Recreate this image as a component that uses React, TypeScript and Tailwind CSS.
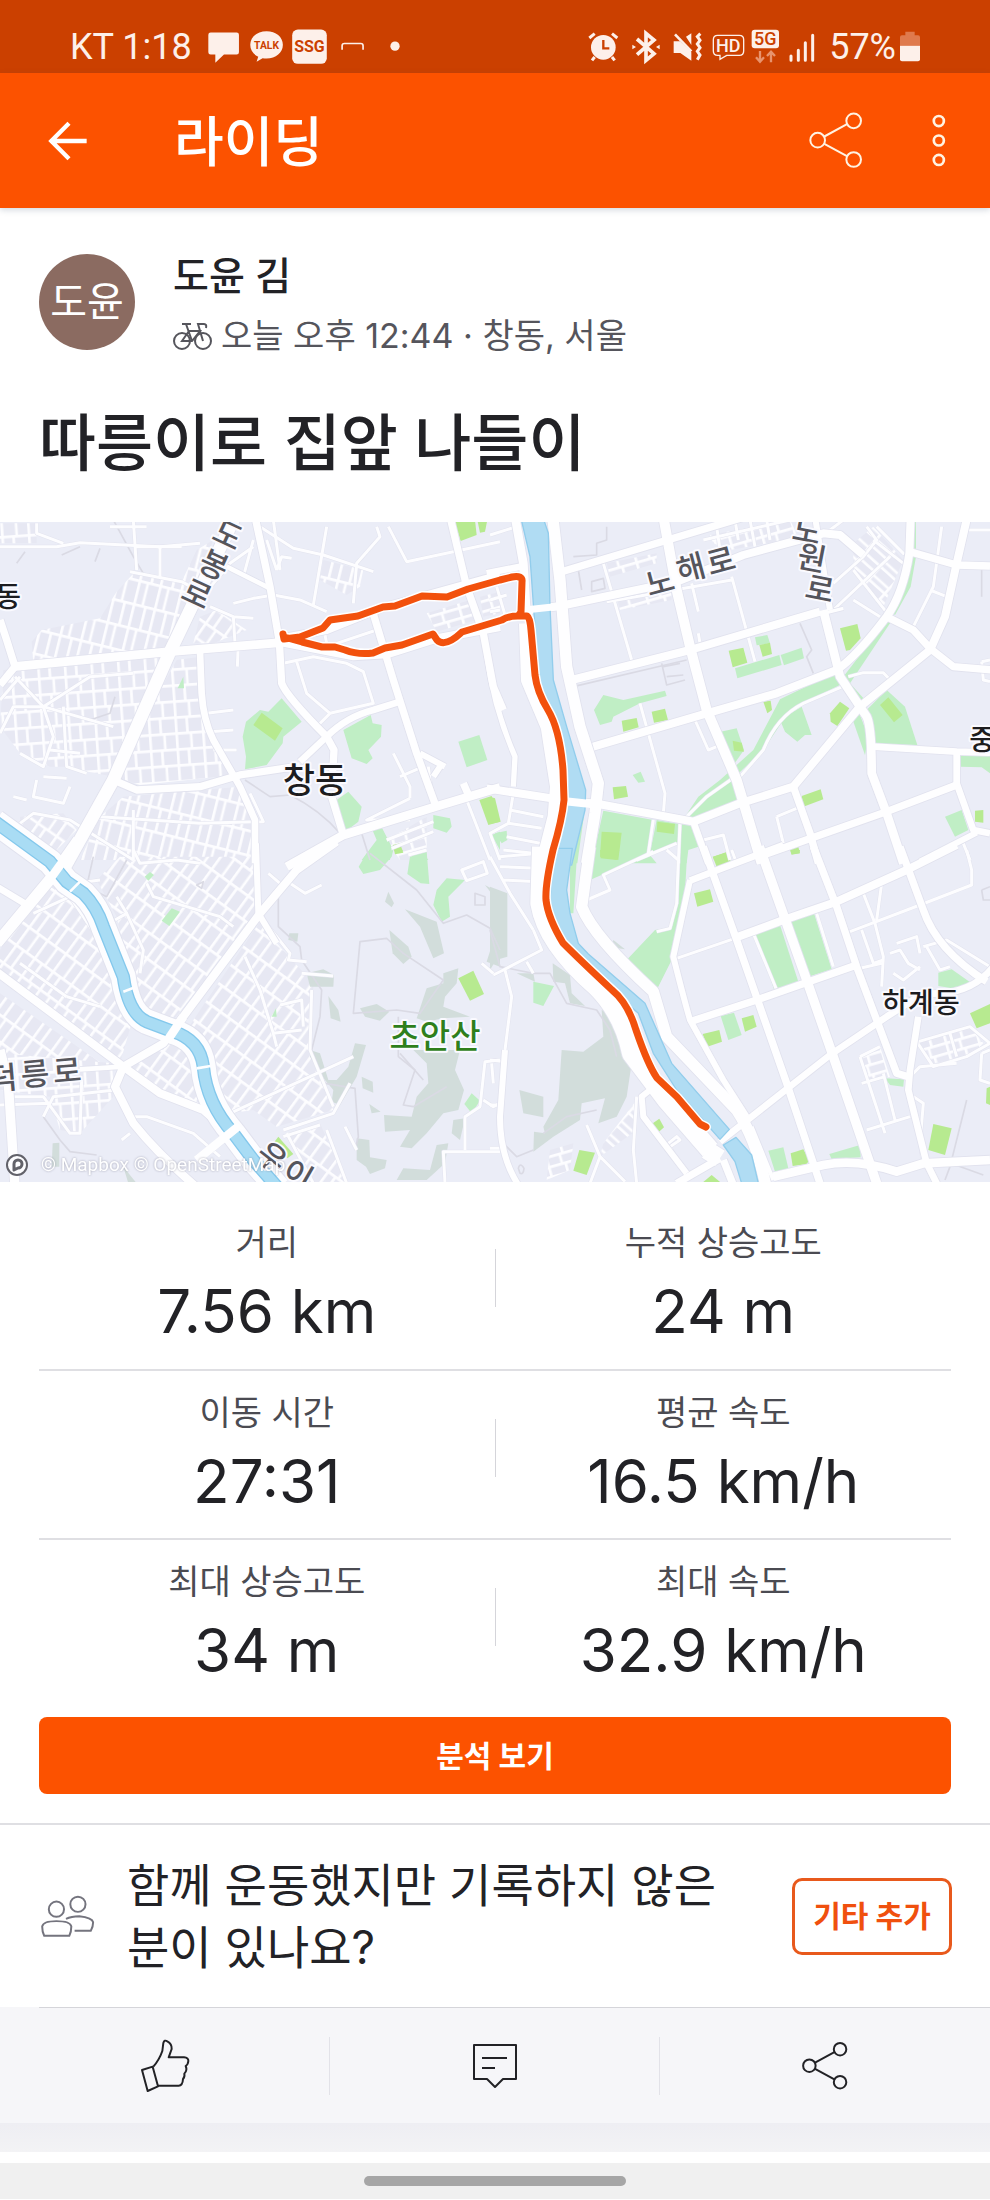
import type { ReactNode } from "react";

type Line = [number, string];

interface Tile {
  x: number;
  y: number;
  grids: [string, string][];
  park: string[];
  lime: string[];
  forest: string[];
  water: string[];
  trails: string[];
  minor: string[];
  roads: Line[];
}

// Each tile is drawn on a 1500-unit wide canvas at a third of its size.
const tiles: Tile[] = [
  {
    x: 0,
    y: 520,
    grids: [
      ["g-lean", "95,365 125,330 300,295 350,215 405,155 545,185 590,90 640,60 505,385 100,430"],
      ["g-flat", "10,450 490,410 340,770 190,740 150,740 60,700 0,620"],
      ["g-flat", "530,420 600,410 615,590 640,660 705,765 420,795 345,770 470,530"],
      ["g-lean", "370,830 720,800 770,900 765,1020 240,1020 300,890"],
      ["g-river", "60,890 190,880 230,930 150,1010 60,950"],
      ["g-lean", "970,120 1090,150 1080,200 1040,225 960,180"],
      ["g-slope", "1280,280 1410,240 1430,300 1310,335"],
      ["g-slope", "1440,230 1500,215 1500,280 1450,290"],
      ["g-slope", "1160,960 1280,890 1280,1020 1200,1020"],
      ["g-flat", "0,10 110,10 110,70 0,70"],
      ["g-river", "600,290 650,270 740,330 640,370 580,370"],
    ],
    park: [
      "845,535 905,605 850,650 848,670 800,735 735,748 738,710 728,650 738,605 780,570 805,575",
      "1030,630 1112,585 1118,610 1145,615 1143,650 1105,690 1118,715 1100,732 1055,715",
      "1010,840 1045,815 1085,860 1075,905 1035,935",
      "1375,665 1438,645 1462,720 1400,742",
      "1300,885 1350,895 1355,920 1340,938 1300,925",
      "1115,925 1145,922 1175,980 1170,1020 1085,1020 1130,960",
      "1235,1005 1270,1000 1285,1020 1235,1020",
      "550,470 552,505 533,505",
      "1475,945 1500,935 1500,990",
    ],
    lime: [
      "785,578 848,625 825,662 760,615",
      "1362,0 1425,0 1430,45 1382,63",
      "1432,0 1462,0 1455,35 1440,38",
      "1438,840 1475,828 1500,905 1465,915",
      "1178,975 1200,970 1210,998 1185,1003",
    ],
    forest: [],
    water: [],
    trails: [
      "M340,0 L400,110 L430,160",
      "M50,130 L75,95 M185,105 L240,80 M285,125 L300,85",
      "M735,780 L810,830 L870,825 Q960,870 1020,940",
      "M1085,940 L1110,1020",
      "M270,600 L330,580 L345,530",
    ],
    minor: [
      "M0,80 L170,80 L240,68 L480,80 L600,70",
      "M110,10 L110,40 L190,70 M330,20 L440,20",
      "M400,0 L410,150 M410,80 L545,80 M480,80 L480,170",
      "M390,155 L545,185 L600,215",
      "M630,260 L700,290 L760,295 M700,290 L705,370 M715,370 L712,440",
      "M700,250 L760,235 L820,225 L900,240 L980,275",
      "M780,20 L880,85 L970,105 L1120,155 M980,20 L940,255 M1130,20 L1140,50 L1070,130 L1060,250",
      "M1165,20 L1220,125 L1500,65 M830,150 L845,110 L875,115 M800,60 L830,150",
      "M850,430 L940,410 L1040,430 L1090,455 L1120,550 L990,580 L950,620",
      "M890,425 L920,520 L990,580",
      "M1010,370 L1130,330 M970,320 L980,370",
      "M620,580 L700,570 M630,635 L700,630 M640,690 L710,690",
      "M0,540 L60,470 M0,640 L40,560 L130,560 L160,650 L130,740 L60,700",
      "M45,470 L130,560 L340,620 M130,560 L270,470 L400,460",
      "M190,560 L200,740 L260,760 M150,690 L240,700",
      "M110,780 L100,830 L190,850 L210,800 M130,770 L200,775",
      "M60,910 L100,880 L210,900 L400,1020 M40,830 L80,840",
      "M1180,700 L1230,800 L1230,835 M1200,770 L1270,740 M1230,835 L1100,900 L1230,900",
      "M1400,840 L1470,1020 M1300,860 L1285,740",
      "M1160,960 L1300,905 M1175,985 L1300,935",
      "M620,215 L690,130 L760,80 M730,170 L760,60",
      "M820,0 L840,150",
      "M400,870 L400,1020 M300,890 L600,910 L790,905 L750,820",
    ],
    roads: [
      [38, "M705,-10 L510,395 L340,780 L195,1040"],
      [26, "M40,440 L510,395 L840,368"],
      [22, "M0,300 L20,360 L45,440 L0,495"],
      [22, "M765,-10 L810,200 L838,365 L845,490 Q860,530 980,650 L1002,690 L998,760 M995,830 L1030,945"],
      [26, "M840,365 L1060,408 L1160,402 L1300,358 L1500,320"],
      [24, "M860,352 L980,330 L1150,262 L1500,165"],
      [22, "M1350,-10 L1400,200 L1450,340 L1480,500 L1510,570"],
      [22, "M1115,265 L1180,480 L1250,700 L1310,865"],
      [20, "M900,725 L980,650 Q1040,590 1120,570 L1200,545"],
      [22, "M340,780 L410,810 L600,800 L720,765 L900,738"],
      [20, "M600,395 L605,520 Q610,600 640,660 L720,800 L765,900 L765,1030"],
      [26, "M860,1040 L1030,945 L1300,862 L1500,802"],
      [18, "M1260,700 L1335,740 M1300,770 L1320,740"],
      [22, "M1390,790 L1412,840"],
      [14, "M680,140 L810,205"],
    ],
  },
  {
    x: 490,
    y: 520,
    grids: [
      ["g-slope", "660,45 900,0 920,40 890,60 720,90 670,70"],
      ["g-diag", "1090,70 1150,20 1240,120 1180,260 1090,150"],
      ["g-slope", "350,130 500,100 500,130 360,170"],
      ["g-slope", "380,230 540,190 545,240 390,270"],
    ],
    park: [
      "1260,0 1278,0 1278,110 1262,200 1215,285 1198,270 1245,200 1258,110",
      "1195,295 1060,470 1080,490 1200,310",
      "1040,455 870,538 790,690 690,780 625,830 585,890 612,902 750,845 735,770 820,690 900,570 1060,490",
      "340,525 400,540 525,512 530,528 450,550 370,590 365,605 330,615 312,570",
      "735,445 868,405 875,435 742,475",
      "872,405 935,383 942,415 882,436",
      "795,352 832,345 840,370 800,376",
      "692,635 740,625 762,690 735,728 715,700",
      "870,600 935,560 965,645 945,645 922,665 885,635",
      "1120,580 1190,510 1245,560 1282,675 1150,672",
      "1085,590 1110,585 1135,650 1125,705",
      "1080,490 1125,540 1110,560 1070,510",
      "428,765 452,755 465,785 445,788",
      "340,872 490,900 475,1000 500,1030 305,1030",
      "500,900 570,912 565,965 480,1000",
      "575,912 605,915 625,980 595,990 590,1030 565,1030",
      "1365,890 1415,870 1435,930 1395,950",
      "1410,705 1500,705 1500,760 1475,742 1412,740",
      "15,940 50,932 52,960 35,970",
      "285,865 262,1030 240,1030 265,950",
    ],
    lime: [
      "1050,325 1102,312 1112,355 1080,390 1068,392",
      "716,392 760,383 772,428 728,442",
      "808,375 840,368 846,402 818,410",
      "395,602 440,594 446,622 400,635",
      "485,575 525,566 534,600 492,608",
      "820,545 842,542 846,570 832,580",
      "1020,580 1050,545 1078,565 1042,618 1022,605",
      "1170,555 1195,532 1238,585 1212,607",
      "728,662 755,668 762,695 732,692",
      "368,802 408,798 414,830 372,838",
      "935,828 992,808 1000,838 940,860",
      "335,935 395,938 385,1020 330,1010",
      "502,905 555,912 552,942 500,935",
      "900,985 925,980 930,1000 905,1003",
      "1455,872 1480,870 1480,908 1455,905",
      "0,830 15,835 32,905 0,912",
      "670,1010 712,995 720,1020 672,1020",
    ],
    forest: [],
    water: [
      "93,-5 160,-5 175,40 180,260 190,480 230,620 287,810 285,870 245,1035 190,1035 228,850 235,800 205,620 150,500 132,280 120,110",
    ],
    trails: [
      "M350,20 L350,60 L320,70 L320,105 L250,110 M265,150 L275,210",
      "M930,310 L965,390 L950,410 L970,460",
      "M515,430 L530,495 L585,480 M520,440 L570,430 M530,470 L580,465",
      "M305,185 L340,175 L345,205 L305,215 Z",
      "M250,500 L590,420 M1475,150 L1475,230",
    ],
    minor: [
      "M340,130 L425,420 M605,190 L625,275 M725,170 L795,425 M350,245 L725,180",
      "M625,340 L630,370 M680,20 L690,90 M735,0 L745,60 M780,0 L795,80 M830,0 L840,60 M640,60 L900,0",
      "M1090,150 L1200,290 M1030,190 L1120,110 L1160,60 L1130,20 M1150,60 L1240,130 M1020,30 L1060,0 M1030,270 L1200,110",
      "M1090,240 L1170,290 M1160,20 L1240,100 L1180,40",
      "M1355,20 L1330,200 L1270,320 M1320,210 L1370,230 M1410,30 L1500,30",
      "M1075,470 L1120,458 L1180,458 L1210,490 M1080,490 L940,550 Q860,590 820,690 L750,770",
      "M615,600 L655,690 L680,680 M450,550 L525,820 L520,880 M490,900 L475,1000 M570,910 L565,1030",
      "M735,770 L650,830 L590,890 M860,890 L920,865 M860,890 L880,970 M640,960 L700,945 L720,1020",
      "M20,200 L45,285 M0,240 L50,225 M0,275 L30,270",
      "M60,870 L160,890 M55,910 L155,925 M50,950 L150,970 M30,1010 L150,1000 M70,820 L55,910 L0,940 L30,1020",
      "M440,1020 L560,970 M1475,425 L1500,420 M1475,425 L1480,480 L1500,485",
      "M1420,970 L1440,1020 M0,45 L80,20",
    ],
    roads: [
      [26, "M75,-10 L100,130 L108,260"],
      [46, "M110,310 L116,480 L175,620 L203,800 L196,890 L160,1030"],
      [34, "M188,-10 L210,180 L230,440 L270,620 L325,790 L315,880 L290,1030"],
      [30, "M520,-10 L560,210 L600,380 L650,570 L740,780 L815,1030"],
      [22, "M215,155 L500,70 L800,-20"],
      [24, "M120,270 L210,258 L560,185 L760,105 L1000,40 L1050,45 L1120,105"],
      [20, "M-10,160 L90,140"],
      [24, "M245,480 L600,390 L990,275"],
      [10, "M1000,280 L1060,265"],
      [24, "M310,680 L650,580 L860,520 L1040,450 Q1100,410 1190,290 Q1240,220 1258,100 L1262,-10"],
      [26, "M1000,270 L1050,470 L1130,590 Q1145,620 1145,760 L1190,880 L1240,1030"],
      [18, "M975,-10 L1020,270"],
      [22, "M1260,95 L1400,135 L1500,138"],
      [24, "M1432,-10 L1400,130 L1365,290 L1320,390 L1110,560 L910,800 L750,850 L610,905 L325,852 L230,842 L-10,805"],
      [22, "M1190,290 L1270,330 L1320,385 L1390,440 L1510,450"],
      [20, "M1150,680 L1400,695 L1500,698"],
      [20, "M1400,695 L1400,790 L1450,930 L1500,940"],
      [22, "M820,1005 L1190,875 L1400,795"],
      [22, "M910,800 L960,940 L985,1030"],
      [20, "M610,905 L655,1030"],
      [18, "M1290,1025 L1460,938"],
      [16, "M-10,400 Q10,560 75,710 L70,800"],
    ],
  },
  {
    x: 0,
    y: 850,
    grids: [
      ["g-sw", "0,300 150,90 240,120 300,240 370,420 400,500 360,640 0,380"],
      ["g-sw", "0,430 320,650 0,640"],
      ["g-sw", "360,20 760,20 770,190 520,510 440,480 380,330 350,200 290,90"],
      ["g-sw", "790,200 830,280 940,400 935,600 1000,780 830,830 760,780 690,790 640,640 560,540"],
      ["g-sw", "390,650 520,560 590,640 620,770 480,720"],
      ["g-flat", "120,620 340,640 340,740 240,850 180,840 150,740 0,720 0,610"],
      ["g-sw", "860,850 960,820 1040,1000 930,1000"],
    ],
    park: [
      "1100,10 1180,0 1175,20 1140,60 1090,72 1076,50",
      "1230,20 1280,5 1288,102 1262,100 1222,72",
      "1340,85 1395,90 1345,140 1350,200 1325,215 1300,165 1310,120",
      "515,175 540,185 508,228 485,212",
      "450,66 462,75 445,92 434,80",
      "1415,730 1440,752 1415,790 1393,762",
      "828,475 830,500 815,500",
    ],
    lime: [
      "1375,385 1420,362 1452,432 1410,452",
      "835,860 880,912 862,925 820,880",
      "1182,0 1210,0 1195,10",
    ],
    forest: [
      "1215,178 1310,215 1332,310 1300,325 1260,230",
      "1168,240 1225,290 1235,320 1210,342 1178,310",
      "1165,125 1182,160 1175,172 1155,155",
      "868,250 895,250 892,275 865,270",
      "920,370 970,358 1002,375 1000,410 930,410",
      "985,438 1015,480 1022,515 992,505",
      "1080,475 1130,462 1168,485 1140,512 1095,500",
      "1330,370 1375,355 1370,400 1335,440 1330,470 1410,500 1330,505 1280,515 1250,505 1280,415 1330,400",
      "1240,600 1380,600 1365,660 1392,720 1375,780 1330,790 1280,850 1235,895 1200,890 1230,840 1155,845 1152,795 1235,800 1250,740 1285,700 1280,640",
      "1065,580 1098,585 1070,680 1020,765 995,755 1000,720 975,690 930,620 930,600 960,610 985,690 1010,690 1045,650",
      "1085,680 1118,695 1120,728 1088,715",
      "1108,762 1142,785 1115,790",
      "1070,865 1108,870 1110,922 1160,930 1155,955 1110,972 1098,950 1070,930",
      "1360,810 1395,805 1380,870 1355,850",
      "1310,885 1345,880 1335,940 1280,990 1190,990 1210,955 1290,960",
      "1455,105 1500,130 1500,350 1460,335 1490,240 1490,150",
      "158,880 178,878 178,950 155,950",
      "370,950 410,1000 385,1000",
    ],
    water: [],
    trails: [
      "M835,120 L835,230 L900,290 L905,330 L965,420 L960,500 L935,600 L975,700 L1065,715 L1075,860 L1065,900",
      "M1080,275 L1160,265 L1210,310 L1330,390 L1260,490 L1190,480 L1060,490 Z",
      "M1110,10 L1250,120 L1330,220 L1400,195 L1470,235 L1500,300",
      "M1195,500 L1195,620 L1245,660 L1210,765 L1240,770 L1340,710",
      "M1425,130 L1455,140 L1455,165 L1425,165 Z",
      "M130,800 L180,870 L210,905 L290,915 M280,20 L260,110 L320,140 L380,30",
      "M1200,610 L1270,690 M590,105 L610,95 L605,115 Z",
    ],
    minor: [
      "M60,340 L200,440 M40,740 L130,740 L210,850 L240,850 L245,690",
      "M400,0 L420,40 L530,30 L600,40 M440,100 L460,140 L660,200 L700,230",
      "M350,140 L380,190 L345,210 M380,190 L430,300 L420,370",
      "M870,100 L915,130 L965,105 M840,100 L805,70 M1225,15 L1280,0",
      "M735,320 L780,420 L820,550 L830,590 M790,210 L870,310 L865,330 L920,335 M820,550 L905,540",
      "M905,370 L1000,378 M935,420 L930,600 L1000,770 M840,465 L905,450 L910,530",
      "M690,790 L1060,620 M1050,700 L1000,790 L850,840 M850,860 L960,825",
      "M400,800 L440,800 L580,850 L660,920 M365,870 L390,850",
      "M345,720 L160,740 L130,800 M0,765 L150,760",
      "M1385,60 L1450,35 L1462,70 L1400,92 Z M1445,340 L1480,370",
      "M1450,750 L1480,770 L1500,760 M1335,1000 L1330,905 L1500,905 M1395,900 L1395,800 L1440,770 L1455,635 L1500,630",
      "M230,100 L300,90 M100,190 L210,140 L290,260 M200,440 L300,470",
      "M860,850 L940,1000 M1070,900 L1035,830 M980,840 L1040,1000",
    ],
    roads: [
      [34, "M235,-30 L165,70 L-10,280"],
      [24, "M1010,-25 L890,60 L780,190 L520,540 L490,580 L370,650 L345,710 L400,820 Q480,920 600,1020"],
      [18, "M768,-20 L775,190 L830,280"],
      [24, "M-10,365 L370,650 L480,730 L610,780 L680,840"],
      [20, "M-10,110 L90,170"],
      [28, "M0,600 L25,700 L45,1010"],
      [14, "M240,658 L370,650"],
      [20, "M590,930 L710,835"],
    ],
  },
  {
    x: 490,
    y: 850,
    grids: [
      ["g-slope", "1285,580 1440,530 1480,580 1440,620 1330,640"],
      ["g-slope", "1110,620 1170,590 1200,680 1130,700"],
      ["g-diag", "440,750 440,840 330,920 340,880"],
      ["g-slope", "180,900 250,880 240,960 170,990"],
    ],
    park: [
      "300,0 490,0 350,68 300,90",
      "570,0 592,0 582,180 545,330 495,430 475,420 410,330 495,240 545,232 565,160",
      "240,50 262,0 250,190 240,190",
      "795,248 870,225 925,395 852,418",
      "900,212 972,190 1025,358 955,380",
      "692,498 732,488 755,555 715,570",
      "130,395 192,408 160,468 130,458",
      "1345,368 1385,358 1448,402 1420,420 1345,408",
      "1185,685 1242,688 1240,710 1200,705",
      "835,902 880,892 895,955 855,965",
      "1018,912 1110,885 1112,922 1025,928",
    ],
    lime: [
      "330,0 388,0 380,30 332,25",
      "668,20 715,6 722,35 680,50",
      "612,130 660,118 670,155 622,170",
      "638,552 688,540 696,575 652,590",
      "755,505 790,495 800,530 765,545",
      "900,0 930,0 928,10 905,14",
      "485,822 508,806 522,832 502,850",
      "268,900 315,908 290,975 250,962",
      "902,910 940,898 958,930 950,942 908,948",
      "1330,822 1385,835 1365,915 1315,900",
      "1440,490 1500,462 1500,520 1460,535",
      "1490,715 1500,710 1500,765 1488,760",
      "635,1000 665,975 695,1000",
    ],
    forest: [
      "0,110 52,130 52,320 18,330 0,360",
      "188,340 240,375 245,430 285,468 240,460 225,400 190,395",
      "335,480 380,500 400,560 425,640 410,740 380,800 325,820 345,745 275,760 270,810 190,860 130,905 132,845 165,850 160,830 205,750 215,600 280,605 340,560",
      "88,720 160,740 160,802 100,790",
      "190,50 215,30 210,70 195,80",
      "80,370 130,370 135,395",
      "370,270 405,298 365,292",
    ],
    water: [
      "192,-5 247,-5 230,120 240,190 265,280 295,312 465,460 545,640 718,838 690,868 560,720 490,610 445,490 300,365 205,250 180,150",
      "700,885 738,862 785,915 805,1000 755,1000 735,935",
    ],
    trails: [
      "M0,240 L30,350 L130,370 L180,370 L230,460 L320,480 L360,540 L380,620",
      "M130,900 L80,920 L40,880 M320,780 L230,800 L160,850",
      "M1430,750 L1380,950 L1365,990 M1370,935 L1480,975",
      "M85,955 Q90,935 102,955 Q100,975 90,970 Z",
      "M1475,120 L1500,110 M1475,120 L1480,150 L1500,150",
    ],
    minor: [
      "M0,20 L60,130 L130,240 M40,90 L145,95 M30,50 L140,55 M40,0 L150,12",
      "M130,240 L155,300 L40,360 L10,375 M45,360 L65,440 L45,600 M110,335 L130,370",
      "M290,150 L360,120 L340,75 L490,5 M530,0 L565,30 L560,160 L540,235 L500,245",
      "M560,325 L735,265 M1080,245 L1290,165 L1445,105 L1445,60 L1430,0",
      "M1120,130 L1155,220 L1180,320 L1175,410 M1175,100 L1160,210 M1115,240 L1150,340 L1180,330 M1110,355 L1175,340",
      "M1200,310 L1230,300 L1255,340 L1290,360 M1220,280 L1280,260 L1290,310 M1210,370 L1240,390 L1290,350 M1300,290 L1370,270 L1500,350 M1310,290 L1350,360 L1380,350",
      "M980,190 L1030,350 M725,0 L740,40 M790,250 L860,420",
      "M1280,575 L1330,650 L1430,620 L1500,580 M1260,680 L1290,650 L1400,640 M1285,575 L1440,530 L1500,580 M1380,550 L1400,620",
      "M1110,620 L1185,850 M1180,670 L1215,810 M1115,700 L1185,680 M1130,840 L1260,800 M1110,620 L1170,590 M1255,730 L1300,760 L1290,880 L1300,940",
      "M535,880 L560,860 L570,870 L540,890 L555,920 M290,825 L330,920 L405,995 M440,740 L430,900 L440,1000 M330,920 L300,1000",
      "M0,630 L45,635 M0,765 L30,765 M0,895 L35,895 M5,640 L10,700 M1475,610 L1500,600 M1475,610 L1470,690 L1500,700",
    ],
    roads: [
      [58, "M155,-10 L150,160 Q170,280 320,410 Q400,490 425,610 L530,750 L660,900"],
      [34, "M300,-10 L275,170 Q310,260 490,425 L530,560 L740,780 Q800,870 828,1010"],
      [22, "M640,-10 L740,270 L890,700 L990,1000"],
      [28, "M808,-10 L950,390 L1030,620 L1160,1000"],
      [22, "M970,-10 L1040,170 L1100,350 L1220,670 L1255,680"],
      [22, "M1230,-10 L1300,180 Q1340,300 1490,395"],
      [20, "M600,92 L670,65 L880,-15"],
      [18, "M600,90 L550,320 Q580,440 600,510 L700,690 L770,800"],
      [12, "M785,830 L850,990"],
      [24, "M740,262 L880,210 L1040,155 L1250,60 L1400,-15"],
      [22, "M600,515 L800,450 L1100,345"],
      [20, "M690,875 L1020,615 L1190,500 L1300,430 Q1440,440 1510,350"],
      [20, "M1285,500 L1260,660 L1255,720 L1310,940 L1345,1010"],
      [26, "M850,980 L1000,945 Q1100,925 1220,965 L1300,940 L1500,930"],
      [18, "M45,600 L30,800 Q30,920 85,1005"],
      [18, "M480,720 L455,740 L460,800 L590,970"],
      [54, "M650,900 L690,925"],
      [22, "M690,925 L560,1000 M700,930 L730,1005"],
    ],
  },
];

const canal = "M-15,-85 L150,35 L200,95 L250,130 Q290,170 310,230 L370,380 Q385,490 440,515 L520,545 Q600,570 610,650 Q620,760 700,850 L760,930 L835,1015";

const route =
  "M283,634 L284,639 L300,637 L323,628 L330,620 L358,616 L383,607 L395,606 L422,596 L447,597 L468,589 L500,580 L512,577 Q523,575 522,582 L521,612 L518,616 Q508,616 502,620 L482,626 L462,632 Q445,648 437,640 L433,634 L402,645 L385,648 L373,653 Q358,655 345,650 L335,647 L322,647 L302,642 L284,637 M518,616 L527,616 Q530,618 531,630 L535,675 Q537,692 548,710 Q560,730 563,770 L564,800 Q562,820 553,850 Q545,885 546,900 Q548,918 563,943 Q580,960 612,990 Q628,1003 636,1030 Q648,1065 657,1078 L677,1097 L700,1124 L706,1127";

const grids = [
  { id: "g-lean", w: 32, h: 72, r: 14 },
  { id: "g-flat", w: 40, h: 48, r: -4 },
  { id: "g-river", w: 34, h: 52, r: 35 },
  { id: "g-slope", w: 48, h: 30, r: -16 },
  { id: "g-diag", w: 26, h: 64, r: -48 },
  { id: "g-sw", w: 34, h: 66, r: 36 },
];

const labels = [
  { t: "도", x: 228, y: 535, r: 25, c: "fill-[#55555c] font-medium text-[31px]" },
  { t: "봉", x: 214, y: 565, r: 25, c: "fill-[#55555c] font-medium text-[31px]" },
  { t: "로", x: 197, y: 594, r: 25, c: "fill-[#55555c] font-medium text-[31px]" },
  { t: "노", x: 660, y: 582, r: -15, c: "fill-[#55555c] font-medium text-[31px]" },
  { t: "해", x: 691, y: 568, r: -15, c: "fill-[#55555c] font-medium text-[31px]" },
  { t: "로", x: 721, y: 561, r: -15, c: "fill-[#55555c] font-medium text-[31px]" },
  { t: "노", x: 807, y: 531, r: 11, c: "fill-[#55555c] font-medium text-[31px]" },
  { t: "원", x: 812, y: 558, r: 11, c: "fill-[#55555c] font-medium text-[31px]" },
  { t: "로", x: 820, y: 589, r: 11, c: "fill-[#55555c] font-medium text-[31px]" },
  { t: "덕", x: 3, y: 1078, r: -5, c: "fill-[#55555c] font-medium text-[31px]" },
  { t: "릉", x: 35, y: 1074, r: -5, c: "fill-[#55555c] font-medium text-[31px]" },
  { t: "로", x: 67, y: 1071, r: -5, c: "fill-[#55555c] font-medium text-[31px]" },
  { t: "우", x: 272, y: 1157, r: 38, c: "fill-[#55555c] font-medium text-[31px]" },
  { t: "이", x: 298, y: 1175, r: 30, c: "fill-[#55555c] font-medium text-[31px]" },
  { t: "동", x: 8, y: 597, r: 0, c: "fill-[#1d1d20] font-medium text-[28px]" },
  { t: "중", x: 982, y: 740, r: 0, c: "fill-[#1d1d20] font-medium text-[28px]" },
  { t: "창동", x: 315, y: 780, r: 0, c: "fill-[#1d1d20] font-medium text-[35px]" },
  { t: "하계동", x: 921, y: 1003, r: 0, c: "fill-[#1d1d20] font-medium text-[28px]" },
  { t: "초안산", x: 435, y: 1036, r: 0, c: "fill-[#2f7f1c] font-medium text-[33px]" },
];

function Layer({ draw }: { draw: (t: Tile) => ReactNode }) {
  return (
    <>
      {tiles.map((t) => (
        <g key={`${t.x}-${t.y}`} transform={`translate(${t.x} ${t.y}) scale(0.33333)`}>
          {draw(t)}
        </g>
      ))}
    </>
  );
}

function RouteMap() {
  const poly = (list: string[], fill: string) => list.map((p) => <polygon key={p} points={p} fill={fill} />);
  const lines = (list: string[], stroke: string, w: number) =>
    list.map((d) => <path key={d} d={d} stroke={stroke} strokeWidth={w} />);
  return (
    <svg
      viewBox="0 522 990 660"
      className="block h-auto w-full bg-[#ebedf7] font-['Noto_Sans_CJK_KR',sans-serif]"
      fill="none"
      strokeLinejoin="round"
      role="img"
      aria-label="라이딩 경로 지도"
    >
      <defs>
        {grids.map((g) => (
          <pattern key={g.id} id={g.id} width={g.w * 2} height={g.h * 2} patternUnits="userSpaceOnUse" patternTransform={`rotate(${g.r})`}>
            <rect width={g.w * 2} height={g.h * 2} fill="#e7e8f3" />
            <path
              d={`M0,4 H${g.w * 2} M0,${g.h + 4} H${g.w * 2} M4,0 V${g.h * 2} M${g.w + 7},0 V${g.h} M${g.w - 3},${g.h} V${g.h * 2}`}
              stroke="#fdfdff"
              strokeWidth="8"
            />
          </pattern>
        ))}
      </defs>
      <Layer draw={(t) => t.grids.map(([id, p]) => <polygon key={p} points={p} fill={`url(#${id})`} />)} />
      <Layer draw={(t) => poly(t.forest, "#d2dddb")} />
      <Layer draw={(t) => poly(t.park, "#c0eec5")} />
      <Layer draw={(t) => poly(t.lime, "#b7ea90")} />
      <Layer draw={(t) => lines(t.trails, "#dadae4", 5)} />
      <Layer draw={(t) => lines(t.minor, "#e3e4ef", 12)} />
      <Layer draw={(t) => lines(t.minor, "#fdfdff", 9)} />
      <Layer draw={(t) => t.roads.map(([w, d]) => <path key={d} d={d} stroke="#e1e2ee" strokeWidth={w + 5} />)} />
      <g transform="translate(0 850) scale(0.33333)">
        <path d={canal} stroke="#e1e2ee" strokeWidth="80" />
        <path d={canal} stroke="#fdfdff" strokeWidth="74" />
      </g>
      <Layer draw={(t) => t.roads.map(([w, d]) => <path key={d} d={d} stroke="#fefeff" strokeWidth={w} />)} />
      <Layer draw={(t) => t.water.map((p) => <polygon key={p} points={p} fill="#b0dcf3" stroke="#92cdec" strokeWidth="4" />)} />
      <g transform="translate(0 850) scale(0.33333)">
        <path d={canal} stroke="#84c8ec" strokeWidth="40" />
        <path d={canal} stroke="#a9dcf4" strokeWidth="32" />
        <path d="M235,-30 L130,115 M550,500 L500,575 M590,930 L720,825" stroke="#fefeff" strokeWidth="26" />
        <path d="M210,125 L240,95 M370,425 L405,412 M590,655 L632,648" stroke="#fefeff" strokeWidth="8" />
      </g>
      <path d="M525,610 L562,606" stroke="#fefeff" strokeWidth="7" />
      <path d="M563,801 L600,805" stroke="#fefeff" strokeWidth="8" />
      <path d={route} stroke="#ffffff" strokeWidth="10" strokeLinecap="round" />
      <path d={route} stroke="#f2510d" strokeWidth="7" strokeLinecap="round" />
      {labels.map((l) => (
        <text
          key={`${l.x}-${l.y}`}
          transform={`translate(${l.x} ${l.y}) rotate(${l.r})`}
          textAnchor="middle"
          dy="0.36em"
          stroke="#fafaff"
          strokeWidth="4"
          paintOrder="stroke"
          className={l.c}
        >
          {l.t}
        </text>
      ))}
      <circle cx="17" cy="1165" r="10" fill="#fdfdff" stroke="#62626a" strokeWidth="2" />
      <path d="M14,1170 V1164 A4 4 0 1 1 18,1168 Z" stroke="#62626a" strokeWidth="3" />
      <text x="41" y="1171" className="fill-white font-['Roboto',sans-serif] text-[19px] drop-shadow-[0_0_1px_rgba(120,120,140,0.6)]">
        © Mapbox © OpenStreetMap
      </text>
    </svg>
  );
}

function ShareIcon({ className, width }: { className: string; width: number }) {
  return (
    <svg viewBox="955 332 168 176" className={className} fill="none" stroke="currentColor" strokeWidth={width}>
      <circle cx="984" cy="419" r="22" />
      <circle cx="1092" cy="361" r="22" />
      <circle cx="1092" cy="477" r="22" />
      <path d="M1004,408 L1072,371 M1004,430 L1072,467" />
    </svg>
  );
}

function StatusBar() {
  return (
    <div className="flex h-[73px] items-center justify-between bg-[#cb4000] pt-5 pr-[70px] pl-[70px] text-[#fdf0ea]">
      <div className="flex items-center">
        <span className="font-['Roboto',sans-serif] text-[36px] leading-none">KT 1:18</span>
        <svg viewBox="620 84 580 104" className="ml-4 h-[35px] w-[193px]" fill="currentColor">
          <path d="M628,94 H706 Q713,94 713,101 V153 Q713,160 706,160 H668 L642,185 V160 H628 Q621,160 621,153 V101 Q621,94 628,94 Z" />
          <path d="M796,90 C824,90 845,107 845,131 C845,155 824,172 796,172 Q790,172 784,171 L766,182 L771,167 C756,160 747,147 747,131 C747,107 768,90 796,90 Z" />
          <rect x="873" y="85" width="104" height="103" rx="17" />
          <path d="M1023,146 V134 Q1023,127 1030,127 H1079 Q1086,127 1086,134 V146" fill="none" stroke="currentColor" strokeWidth="5" />
          <circle cx="1182" cy="135" r="14" />
          <text x="796" y="143" textAnchor="middle" className="fill-[#cb4000] font-['Roboto',sans-serif] text-[31px] font-bold">TALK</text>
          <text x="925" y="152" textAnchor="middle" className="fill-[#cb4000] font-['Roboto',sans-serif] text-[48px] font-bold">SSG</text>
        </svg>
      </div>
      <div className="flex items-center">
        <svg viewBox="296 80 684 108" className="mr-[13px] h-9 w-[228px]" fill="currentColor">
          <circle cx="342" cy="135" r="37" />
          <path d="M316,164 L308,174 M368,164 L376,174 M300,107 L316,94 M384,107 L368,94" stroke="currentColor" strokeWidth="9" />
          <path d="M342,113 V138 H360" fill="none" stroke="#cb4000" strokeWidth="7" />
          <path d="M443,110 L494,154 L470,174 V93 L494,113 L443,157" fill="none" stroke="currentColor" strokeWidth="11" />
          <path d="M429,127 L440,134 L429,141 Z M511,127 L500,134 L511,141 Z" />
          <path d="M553,117 H572 L606,150 V175 L573,152 H553 Z M590,103 L606,93 V128 Z" />
          <path d="M557,96 L606,147" stroke="currentColor" strokeWidth="8" />
          <path d="M633,94 L624,103 L632,114 L624,125 L632,136 L624,147 L632,158 L624,172" fill="none" stroke="currentColor" strokeWidth="9" />
          <path d="M685,99 H750 Q763,99 763,112 V146 Q763,159 750,159 H712 L692,171 V159 H685 Q672,159 672,146 V112 Q672,99 685,99 Z" fill="none" stroke="currentColor" strokeWidth="4" />
          <text x="717" y="149" textAnchor="middle" className="font-['Roboto',sans-serif] text-[54px] font-medium">HD</text>
          <rect x="787" y="82" width="82" height="56" rx="9" />
          <text x="828" y="129" textAnchor="middle" className="fill-[#cb4000] font-['Roboto',sans-serif] text-[54px] font-medium">5G</text>
          <path d="M812,146 V176 M800,165 L812,178 L824,165 M845,180 V150 M833,161 L845,148 L857,161" fill="none" stroke="#e8936d" strokeWidth="7" />
          <path d="M905,161 V174 M927,144 V174 M948,121 V174 M970,99 V174" stroke="currentColor" strokeWidth="9" strokeLinecap="round" />
        </svg>
        <span className="font-['Roboto',sans-serif] text-[36px] leading-none">57%</span>
        <svg viewBox="1227 88 60 92" className="ml-1 h-[31px] w-5" fill="currentColor">
          <path d="M1243,90 H1271 V100 H1281 Q1287,100 1287,106 V132 H1227 V106 Q1227,100 1233,100 H1243 Z" fill="#df7a4d" />
          <path d="M1227,132 H1287 V172 Q1287,178 1281,178 H1233 Q1227,178 1227,172 Z" />
        </svg>
      </div>
    </div>
  );
}

function Stat({ label, value }: { label: string; value: string }) {
  return (
    <div className="flex flex-1 flex-col items-center">
      <dt className="text-[34px] leading-[48px] text-[#4b4b52]">{label}</dt>
      <dd className="mt-2 text-[60px] leading-[72px] text-[#222226]">{value}</dd>
    </div>
  );
}

const stats = [
  [["거리", "7.56 km"], ["누적 상승고도", "24 m"]],
  [["이동 시간", "27:31"], ["평균 속도", "16.5 km/h"]],
  [["최대 상승고도", "34 m"], ["최대 속도", "32.9 km/h"]],
];

export default function App() {
  return (
    <div className="flex min-h-screen flex-col bg-white font-['Inter','Noto_Sans_CJK_KR',sans-serif] text-[#222226]" lang="ko">
      <StatusBar />
      <header className="relative flex h-[135px] items-center bg-[#fc5200] pr-11 pl-12 text-white shadow-[0_2px_6px_rgba(60,80,110,0.22)]">
        <button type="button" aria-label="뒤로" className="mr-[87px]">
          <svg viewBox="145 362 117 120" className="h-10 w-[39px]" fill="none" stroke="currentColor" strokeWidth="13">
            <path d="M261,422 H156 M208,369 L155,422 L208,475" />
          </svg>
        </button>
        <h1 className="flex-1 pt-1 text-[54px] leading-none font-medium">라이딩</h1>
        <button type="button" aria-label="공유" className="mr-[68px] text-[#fff3e2]">
          <ShareIcon className="h-[59px] w-14" width={6} />
        </button>
        <button type="button" aria-label="더보기" className="text-[#fff3e2]">
          <svg viewBox="1325 340 41 158" className="h-[53px] w-[14px]" fill="none" stroke="currentColor" strokeWidth="8">
            <circle cx="1345" cy="361" r="15" />
            <circle cx="1345" cy="419" r="15" />
            <circle cx="1345" cy="477" r="15" />
          </svg>
        </button>
      </header>

      <main>
        <section className="px-[39px] pt-11">
          <div className="flex items-start">
            <div className="mt-0.5 flex size-24 items-center justify-center rounded-full bg-[#8b6b61] text-[40px] leading-none text-white">도윤</div>
            <div className="ml-[38px]">
              <p className="text-[39px] leading-[48px] font-medium">도윤 김</p>
              <p className="mt-3 flex items-center text-[34px] leading-[48px] text-[#55555c]">
                <svg viewBox="173 318 40 30" className="mr-2 h-[30px] w-10" fill="none" stroke="currentColor" strokeWidth="2">
                  <circle cx="182" cy="338" r="8" />
                  <circle cx="203" cy="338" r="8" />
                  <path d="M182,338 L189,328 H200 L192,338 Z M192,338 L186,321 M182,321 H191 M203,338 L198,321 H204 Q207,321 206,325" />
                </svg>
                오늘 오후 12:44 · 창동, 서울
              </p>
            </div>
          </div>
          <h2 className="pt-12 pb-[42px] text-[62px] leading-[72px] font-medium">따릉이로 집앞 나들이</h2>
        </section>

        <RouteMap />

        <section className="px-[39px] pt-[17px]">
          <dl>
            {stats.map((row, i) => (
              <div key={row[0][0]} className={i === 0 ? "flex h-[170px] items-start pt-5" : "flex h-[169px] items-start border-t-2 border-[#dfdfe3] pt-[18px]"}>
                <Stat label={row[0][0]} value={row[0][1]} />
                <div className="mt-[30px] h-[58px] w-px bg-[#d5d5da]" />
                <Stat label={row[1][0]} value={row[1][1]} />
              </div>
            ))}
          </dl>
          <button type="button" className="mt-[10px] h-[77px] w-full rounded-lg bg-[#fc5200] text-[30px] leading-none font-bold text-white">
            분석 보기
          </button>
        </section>

        <section className="mt-[29px] flex h-[184px] items-center border-t-2 border-[#dfdfe3] pr-[38px] pl-10">
          <svg viewBox="120 188 165 130" className="h-[43px] w-[55px] shrink-0" fill="none" stroke="#74747e" strokeWidth="6">
            <circle cx="169" cy="231" r="23" />
            <circle cx="234" cy="216" r="23" />
            <path d="M132,311 Q126,300 126,283 Q129,267 169,267 Q211,267 214,283 Q214,300 208,311 Z" />
            <path d="M198,260 Q214,252 238,252 Q277,256 280,270 Q280,285 273,296 H224" />
          </svg>
          <p className="ml-8 flex-1 text-[46px] leading-[62px]">
            함께 운동했지만 기록하지 않은
            <br />
            분이 있나요?
          </p>
          <button type="button" className="h-[77px] w-40 rounded-[10px] border-[3px] border-[#e8591c] text-[30px] leading-none font-bold text-[#f0500e]">
            기타 추가
          </button>
        </section>

        <div className="bg-[#f6f6f9]">
          <div className="ml-[39px] h-px bg-[#d5d5da]" />
          <div className="grid h-[115px] grid-cols-3 items-center">
            <button type="button" aria-label="좋아요" className="flex h-[58px] items-center justify-center border-r border-[#e2e2e8]">
              <svg viewBox="415 625 156 165" className="h-[55px] w-[52px]" fill="none" stroke="#222226" strokeWidth="6" strokeLinejoin="round">
                <path d="M424,721 L456,711 L472,770 L441,784 Z" />
                <path d="M458,711 Q476,690 485,664 L488,640 Q491,629 500,635 Q514,642 513,658 L504,683 H550 Q564,684 563,694 Q562,705 555,709 Q561,722 551,732 Q553,742 547,748 Q546,768 534,768 H472" />
              </svg>
            </button>
            <button type="button" aria-label="댓글" className="flex h-[58px] items-center justify-center border-r border-[#e2e2e8]">
              <svg viewBox="0 0 46 46" className="size-[46px]" fill="none" stroke="#222226" strokeWidth="2" strokeLinejoin="round">
                <path d="M2,2 H44 V36 H31 L23,44 L15,36 H2 Z M10,15 H35 M10,25 H23" />
              </svg>
            </button>
            <button type="button" aria-label="공유하기" className="flex h-[58px] items-center justify-center text-[#222226]">
              <ShareIcon className="h-[50px] w-12" width={7} />
            </button>
          </div>
        </div>
        <div className="h-[29px] bg-linear-to-b from-[#eeeef3] to-[#f3f3f5]" />
      </main>

      <footer className="mt-[11px] flex h-9 items-center justify-center bg-[#f0f0f0]">
        <div className="h-[10px] w-[262px] rounded-full bg-[#a6a6a6]" />
      </footer>
    </div>
  );
}
